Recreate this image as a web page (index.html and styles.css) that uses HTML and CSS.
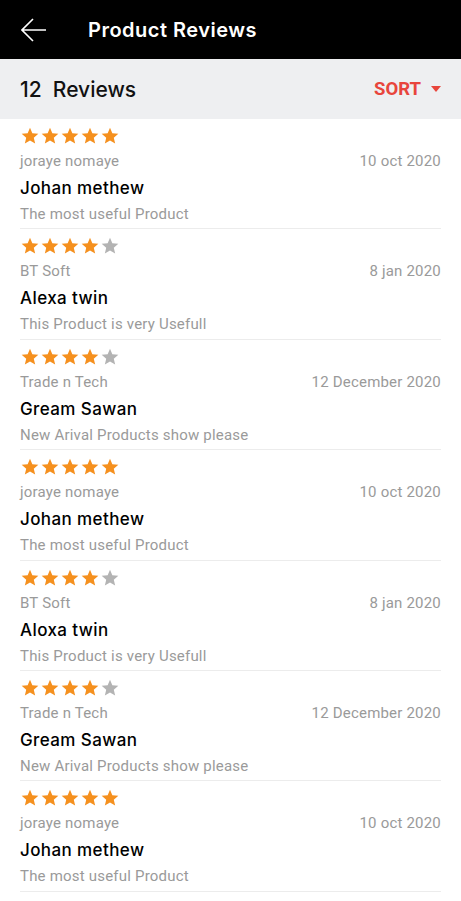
FILE: index.html
```html
<!DOCTYPE html>
<html lang="en">

<head>
    <meta charset="UTF-8">
    <meta name="viewport" content="width=device-width, initial-scale=1.0">
    <title>Product Reviews</title>
    <link rel="stylesheet" href="styles.css">
</head>

<body>
    <svg style="display: none;">
        <symbol id="star" viewBox="0 0 24 24">
            <path d="M12 17.27L18.18 21l-1.64-7.03L22 9.24l-7.19-.61L12 2 9.19 8.63 2 9.24l5.46 4.73L5.82 21z" />
        </symbol>
    </svg>

    <div class="header">
        <a href="javascript:;" class="back">
            <svg width="26" height="26" viewBox="0 0 26 26">
                <path d="M1 13H25M12 2L1 13L12 24" fill="none" stroke="#fff" stroke-width="1.6" />
            </svg>
        </a>
        <h1>Product Reviews</h1>
    </div>

    <div class="toolbar">
        <span class="count">12&nbsp; Reviews</span>
        <a href="javascript:;" class="sort">SORT <i class="caret"></i></a>
    </div>

    <ul class="reviews">
        <li class="review">
            <div class="stars">
                <svg class="on"><use href="#star" /></svg><svg class="on"><use href="#star" /></svg><svg class="on"><use href="#star" /></svg><svg class="on"><use href="#star" /></svg><svg class="on"><use href="#star" /></svg>
            </div>
            <div class="meta"><span>joraye nomaye</span><span>10 oct 2020</span></div>
            <div class="name">Johan methew</div>
            <div class="text">The most useful Product</div>
        </li>
        <li class="review">
            <div class="stars">
                <svg class="on"><use href="#star" /></svg><svg class="on"><use href="#star" /></svg><svg class="on"><use href="#star" /></svg><svg class="on"><use href="#star" /></svg><svg><use href="#star" /></svg>
            </div>
            <div class="meta"><span>BT Soft</span><span>8 jan 2020</span></div>
            <div class="name">Alexa twin</div>
            <div class="text">This Product is very Usefull</div>
        </li>
        <li class="review">
            <div class="stars">
                <svg class="on"><use href="#star" /></svg><svg class="on"><use href="#star" /></svg><svg class="on"><use href="#star" /></svg><svg class="on"><use href="#star" /></svg><svg><use href="#star" /></svg>
            </div>
            <div class="meta"><span>Trade n Tech</span><span>12 December 2020</span></div>
            <div class="name">Gream Sawan</div>
            <div class="text">New Arival Products show please</div>
        </li>
        <li class="review">
            <div class="stars">
                <svg class="on"><use href="#star" /></svg><svg class="on"><use href="#star" /></svg><svg class="on"><use href="#star" /></svg><svg class="on"><use href="#star" /></svg><svg class="on"><use href="#star" /></svg>
            </div>
            <div class="meta"><span>joraye nomaye</span><span>10 oct 2020</span></div>
            <div class="name">Johan methew</div>
            <div class="text">The most useful Product</div>
        </li>
        <li class="review">
            <div class="stars">
                <svg class="on"><use href="#star" /></svg><svg class="on"><use href="#star" /></svg><svg class="on"><use href="#star" /></svg><svg class="on"><use href="#star" /></svg><svg><use href="#star" /></svg>
            </div>
            <div class="meta"><span>BT Soft</span><span>8 jan 2020</span></div>
            <div class="name">Aloxa twin</div>
            <div class="text">This Product is very Usefull</div>
        </li>
        <li class="review">
            <div class="stars">
                <svg class="on"><use href="#star" /></svg><svg class="on"><use href="#star" /></svg><svg class="on"><use href="#star" /></svg><svg class="on"><use href="#star" /></svg><svg><use href="#star" /></svg>
            </div>
            <div class="meta"><span>Trade n Tech</span><span>12 December 2020</span></div>
            <div class="name">Gream Sawan</div>
            <div class="text">New Arival Products show please</div>
        </li>
        <li class="review">
            <div class="stars">
                <svg class="on"><use href="#star" /></svg><svg class="on"><use href="#star" /></svg><svg class="on"><use href="#star" /></svg><svg class="on"><use href="#star" /></svg><svg class="on"><use href="#star" /></svg>
            </div>
            <div class="meta"><span>joraye nomaye</span><span>10 oct 2020</span></div>
            <div class="name">Johan methew</div>
            <div class="text">The most useful Product</div>
        </li>
    </ul>
</body>

</html>
```

FILE: styles.css
```css
* {
    margin: 0;
    padding: 0;
    text-decoration: none;
    box-sizing: border-box;
}

body {
    font-family: Roboto, "Liberation Sans", sans-serif;
    background: #fff;
    color: #000;
}

.header {
    display: flex;
    align-items: center;
    height: 59px;
    padding-left: 21px;
    background: #000;
}

.back {
    display: flex;
    width: 26px;
    height: 26px;
    margin-top: 1px;
}

.header h1 {
    margin-left: 41px;
    font-family: Inter, "Noto Sans", sans-serif;
    font-size: 20px;
    font-weight: 600;
    letter-spacing: 0.5px;
    color: #fff;
}

.toolbar {
    display: flex;
    align-items: center;
    justify-content: space-between;
    height: 60px;
    padding: 0 20px;
    background: #eeeff1;
}

.count {
    font-family: Inter, "Noto Sans", sans-serif;
    font-size: 21px;
    font-weight: 500;
    color: #111;
}

.sort {
    display: flex;
    align-items: center;
    font-size: 18.5px;
    font-weight: bold;
    color: #e8453c;
}

.caret {
    display: inline-block;
    width: 0;
    height: 0;
    margin-left: 10px;
    border-top: 6px solid #e8453c;
    border-left: 5.5px solid transparent;
    border-right: 5.5px solid transparent;
}

.reviews {
    list-style: none;
    padding: 0 20px;
}

.review {
    height: 110.4px;
    padding-top: 7px;
    border-bottom: 1px solid #ececec;
}

.stars {
    display: flex;
    height: 20px;
}

.stars svg {
    width: 20px;
    height: 20px;
    fill: #b3b3b3;
}

.stars svg.on {
    fill: #f5901e;
}

.meta {
    display: flex;
    justify-content: space-between;
    line-height: 30px;
    font-size: 15px;
    letter-spacing: 0.2px;
    color: #9a9a9a;
}

.name {
    line-height: 24px;
    font-family: Inter, "Noto Sans", sans-serif;
    font-size: 17px;
    font-weight: 500;
    letter-spacing: 0.4px;
    color: #000;
}

.text {
    line-height: 28px;
    font-size: 15px;
    letter-spacing: 0.2px;
    color: #9a9a9a;
}
```
